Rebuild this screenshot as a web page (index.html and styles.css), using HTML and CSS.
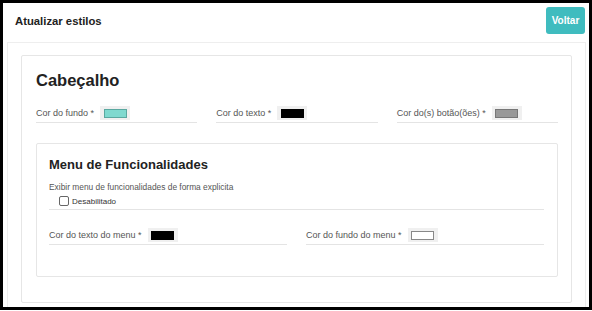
FILE: index.html
```html
<!DOCTYPE html>
<html lang="pt-BR">
<head>
    <meta charset="UTF-8">
    <meta name="viewport" content="width=device-width, initial-scale=1.0">
    <title>Atualizar estilos</title>
    <link rel="stylesheet" href="styles.css">
</head>
<body>
    <div class="frame">
        <div class="top-bar">
            <h1>Atualizar estilos</h1>
            <button type="button" class="back-btn">Voltar</button>
        </div>

        <div class="panel">
            <div class="card">
                <h2>Cabeçalho</h2>
                <div class="row-3">
                    <div class="field">
                        <span class="label">Cor do fundo *</span>
                        <span class="swatch"><span class="chip chip-teal"></span></span>
                    </div>
                    <div class="field">
                        <span class="label">Cor do texto *</span>
                        <span class="swatch"><span class="chip chip-black"></span></span>
                    </div>
                    <div class="field">
                        <span class="label">Cor do(s) botão(ões) *</span>
                        <span class="swatch"><span class="chip chip-gray"></span></span>
                    </div>
                </div>

                <div class="card sub-card">
                    <h3>Menu de Funcionalidades</h3>
                    <div class="check-group">
                        <div class="hint">Exibir menu de funcionalidades de forma explicita</div>
                        <label class="check">
                            <span class="box"></span>
                            <span>Desabilitado</span>
                        </label>
                    </div>
                    <div class="row-2">
                        <div class="field">
                            <span class="label">Cor do texto do menu *</span>
                            <span class="swatch"><span class="chip chip-black"></span></span>
                        </div>
                        <div class="field">
                            <span class="label">Cor do fundo do menu *</span>
                            <span class="swatch"><span class="chip chip-white"></span></span>
                        </div>
                    </div>
                </div>
            </div>
        </div>
    </div>
</body>
</html>
```

FILE: styles.css
```css
body {
    margin: 0;
    font-family: "Liberation Sans", Arial, sans-serif;
    background: #fff;
}
.frame {
    width: 592px;
    height: 310px;
    box-sizing: border-box;
    border: 3px solid #000;
    background: #fff;
    overflow: hidden;
    display: flex;
    flex-direction: column;
}
.top-bar {
    display: flex;
    align-items: center;
    justify-content: space-between;
    padding: 4px 4px 0 12px;
    height: 27px;
}
h1 {
    margin: 0;
    font-size: 11.3px;
    font-weight: bold;
    color: #222;
}
.back-btn {
    width: 39px;
    height: 27px;
    padding: 0;
    border: none;
    border-radius: 3px;
    background-color: #3fbcbf;
    color: #fff;
    font-family: inherit;
    font-size: 10px;
    font-weight: bold;
    cursor: pointer;
}
.panel {
    margin: 8px 3px 0 4px;
    border: 1px solid #eee;
    border-bottom: none;
    padding: 12px 13px 0 13px;
    flex: 1;
}
.card {
    border: 1px solid #e6e6e6;
    border-radius: 2px;
    padding: 14px 13px 25px 14px;
}
h2 {
    margin: 0 0 15px;
    font-size: 16.5px;
    font-weight: bold;
    color: #222;
    line-height: 21px;
}
.row-3 {
    display: grid;
    grid-template-columns: repeat(3, 1fr);
    gap: 19px;
    margin-bottom: 20px;
}
.row-2 {
    display: grid;
    grid-template-columns: repeat(2, 1fr);
    gap: 19px;
}
.field {
    display: flex;
    align-items: center;
    gap: 6px;
    padding-bottom: 2px;
    border-bottom: 1px solid #e4e4e4;
}
.label {
    font-size: 9px;
    color: #555;
}
.hint {
    font-size: 8.4px;
    color: #555;
}
.swatch {
    display: flex;
    align-items: center;
    justify-content: center;
    width: 30px;
    height: 14px;
    background: #f0f0f0;
}
.chip {
    width: 21px;
    height: 7px;
    border: 1px solid #666;
}
.chip-teal { background: #7fd9cf; border-color: #5aa8a0; }
.chip-black { background: #000; border-color: #000; }
.chip-gray { background: #999; border-color: #777; }
.chip-white { background: #fff; border-color: #888; }
.sub-card {
    padding: 12px 13px 31px 12px;
}
h3 {
    margin: 0 0 9px;
    font-size: 13px;
    font-weight: bold;
    color: #222;
    line-height: 17px;
}
.check-group {
    border-bottom: 1px solid #e4e4e4;
    padding-bottom: 3px;
    margin-bottom: 18px;
}
.check {
    display: flex;
    align-items: center;
    gap: 3px;
    margin: 4px 0 0 10px;
    font-size: 8px;
    color: #333;
}
.box {
    width: 8px;
    height: 8px;
    border: 1px solid #666;
    border-radius: 2px;
    background: #fff;
}
```
